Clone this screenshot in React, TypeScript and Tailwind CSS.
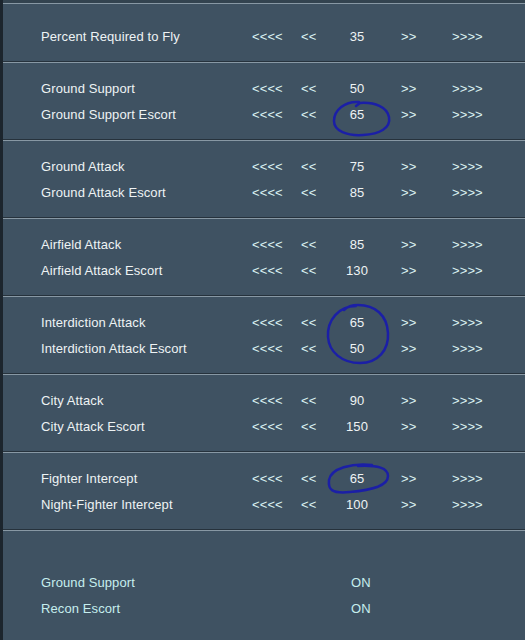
import React from 'react';

type Row = { label: string; value: string };

const sections: Row[][] = [
  [
    { label: 'Ground Support', value: '50' },
    { label: 'Ground Support Escort', value: '65' },
  ],
  [
    { label: 'Ground Attack', value: '75' },
    { label: 'Ground Attack Escort', value: '85' },
  ],
  [
    { label: 'Airfield Attack', value: '85' },
    { label: 'Airfield Attack Escort', value: '130' },
  ],
  [
    { label: 'Interdiction Attack', value: '65' },
    { label: 'Interdiction Attack Escort', value: '50' },
  ],
  [
    { label: 'City Attack', value: '90' },
    { label: 'City Attack Escort', value: '150' },
  ],
  [
    { label: 'Fighter Intercept', value: '65' },
    { label: 'Night-Fighter Intercept', value: '100' },
  ],
];

function Divider() {
  return (
    <div>
      <div className="h-px bg-[#26323c]" />
      <div className="h-px bg-[#8898a4]" />
    </div>
  );
}

function SettingRow({ label, value }: Row) {
  return (
    <div className="flex h-[26px] items-center pl-[38px] pt-[2px] text-[13px] tracking-[0.1px]">
      <div className="w-[211px] text-[#eef3f4]">{label}</div>
      <div className="w-[49px] text-[#dcf3f3]">&lt;&lt;&lt;&lt;</div>
      <div className="w-[20px] text-[#dcf3f3]">&lt;&lt;</div>
      <div className="w-[72px] text-center text-[#eef3f4]">{value}</div>
      <div className="ml-[8px] w-[51px] text-[#dcf3f3]">&gt;&gt;</div>
      <div className="text-[#dcf3f3]">&gt;&gt;&gt;&gt;</div>
    </div>
  );
}

export default function App() {
  return (
    <div
      className="relative h-[640px] w-[525px] overflow-hidden border-l-[3px] border-[#1c252d] bg-[#3f5262]"
      style={{ fontFamily: '"Liberation Sans", Arial, sans-serif' }}
    >
      <div className="h-[3px] bg-[#33434f]" />
      <div className="h-px bg-[#8898a4]" />
      <div className="pb-[12px] pt-[19px]">
        <SettingRow label="Percent Required to Fly" value="35" />
      </div>

      {sections.map((rows, i) => (
        <div key={i}>
          <Divider />
          <div className="pb-[12px] pt-[12px]">
            {rows.map((r) => (
              <SettingRow key={r.label} {...r} />
            ))}
          </div>
        </div>
      ))}

      <Divider />
      <div className="pt-[38px]">
        {['Ground Support', 'Recon Escort'].map((l) => (
          <div
            key={l}
            className="flex h-[26px] items-center pl-[38px] pt-[2px] text-[13px] tracking-[0.1px] text-[#c6eeee]"
          >
            <div className="w-[310px]">{l}</div>
            <div>ON</div>
          </div>
        ))}
      </div>

      <svg
        className="pointer-events-none absolute left-[-3px] top-0"
        width="525"
        height="640"
        fill="none"
        stroke="#1b1fa6"
        strokeWidth="2.5"
        strokeLinecap="round"
      >
        <path d="M359 102 C345 101 334 110 334 121 C334 131 347 136 363 135 C380 134 391 128 389 117 C387 107 375 102 360 103 L356 106" />
        <path d="M356 306 C339 306 327 320 328 337 C329 352 342 363 360 363 C378 363 389 350 388 333 C387 315 375 305 358 305 C351 305 347 307 344 310" />
        <path d="M372 465 C352 463 331 468 329 480 C328 489 331 494 350 492 C372 490 388 486 388 476 C388 468 378 465 358 466" />
      </svg>
    </div>
  );
}
